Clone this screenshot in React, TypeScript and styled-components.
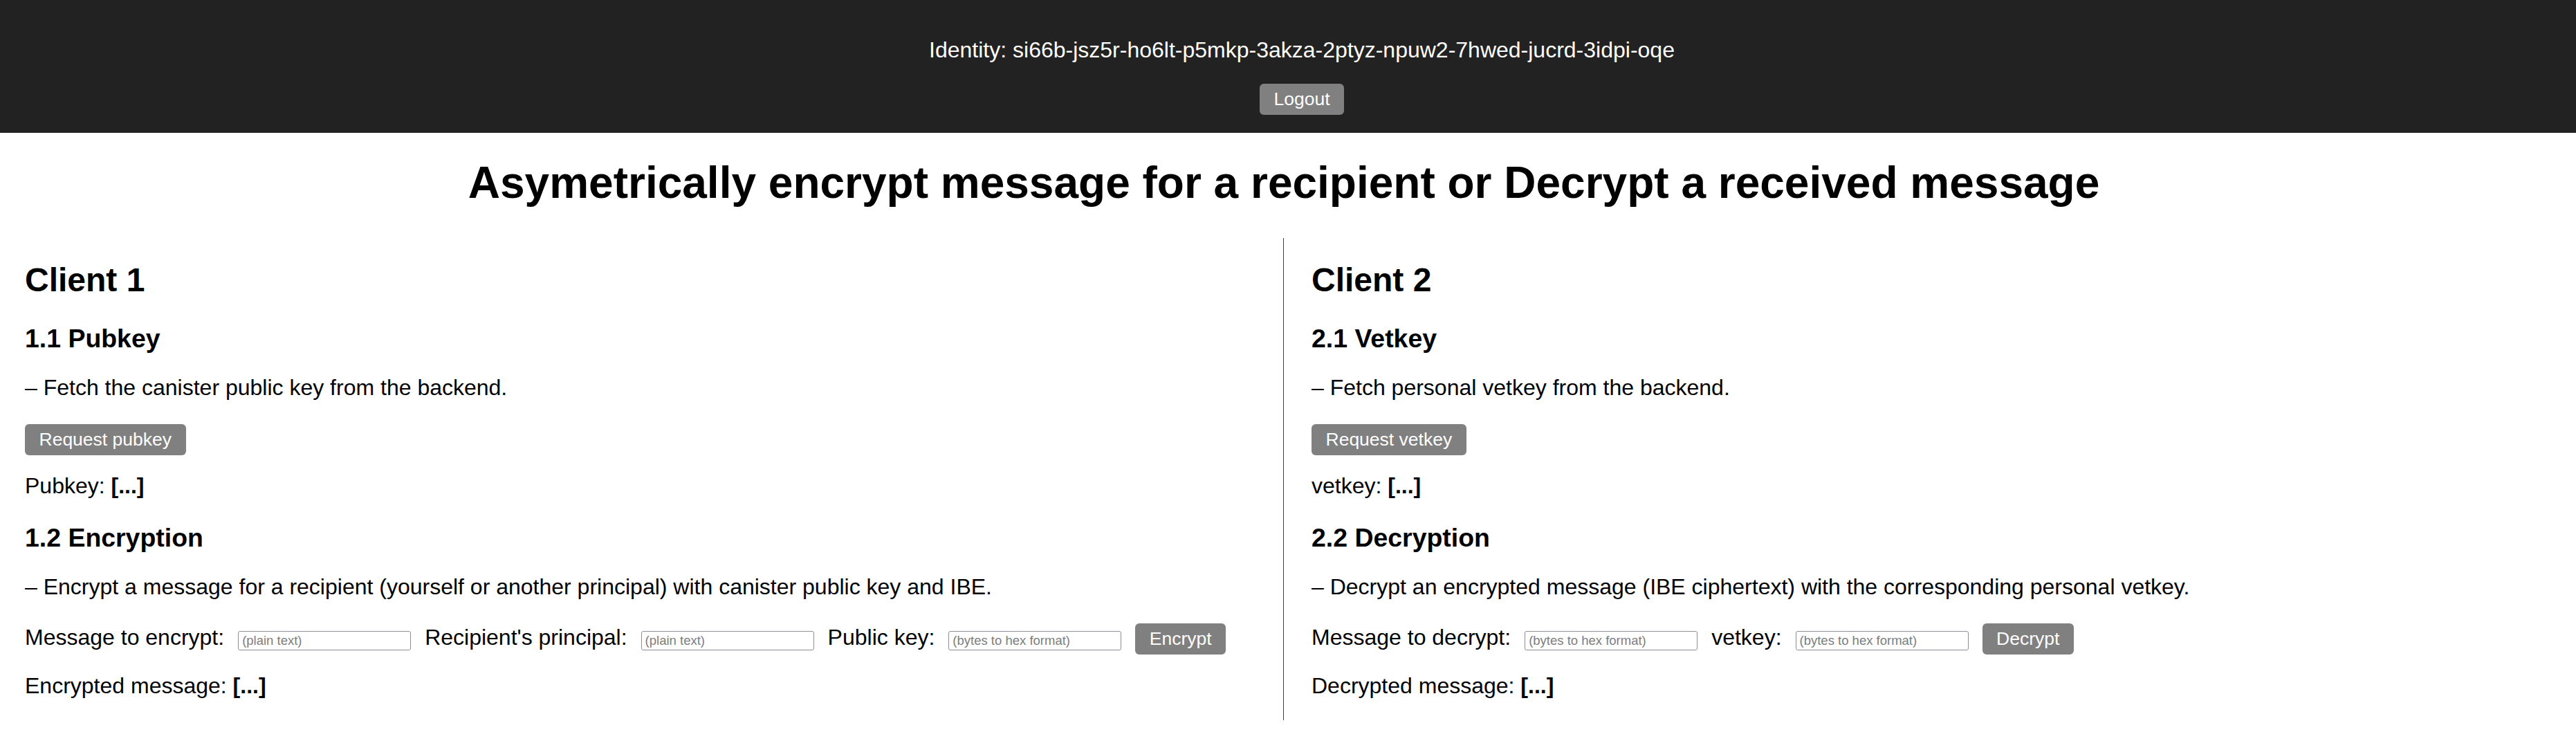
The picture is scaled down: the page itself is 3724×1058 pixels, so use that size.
import React from "react";
import styled, { createGlobalStyle } from "styled-components";

const GlobalStyle = createGlobalStyle`
  html, body {
    margin: 0;
    padding: 0;
    background: #ffffff;
  }
  body {
    font-family: "Liberation Sans", Arial, Helvetica, sans-serif;
    color: #000000;
  }
  * { box-sizing: border-box; }
`;

const Page = styled.div`
  display: flex;
  flex-direction: column;
  width: 100%;
`;

const Header = styled.header`
  background: #222222;
  color: #ffffff;
  display: flex;
  flex-direction: column;
  align-items: center;
  padding: 54px 0 26px 40px;
  gap: 30px;
`;

const Identity = styled.div`
  font-size: 32px;
  line-height: 37px;
`;

const Button = styled.button`
  font-family: "Liberation Sans", Arial, Helvetica, sans-serif;
  font-size: 26.5px;
  line-height: 31px;
  height: 45px;
  padding: 7px 20.5px;
  border: none;
  border-radius: 6px;
  background: #808080;
  color: #ffffff;
  cursor: pointer;
  flex: none;
`;

const Title = styled.h1`
  margin: 35px 0 43px;
  padding-right: 12px;
  font-size: 64px;
  line-height: 74px;
  font-weight: bold;
  text-align: center;
`;

const Columns = styled.main`
  display: grid;
  grid-template-columns: 1855px 1fr;
`;

const Column = styled.section<{ $divider?: boolean }>`
  display: flex;
  flex-direction: column;
  align-items: flex-start;
  padding: 33px 20px 31px ${(p) => (p.$divider ? "40px" : "36px")};
  border-left: ${(p) => (p.$divider ? "1px solid #3a3a3a" : "none")};
`;

const ClientTitle = styled.h2`
  margin: 0;
  font-size: 48px;
  line-height: 56px;
  font-weight: bold;
`;

const SectionTitle = styled.h3`
  margin: 34px 0 0;
  font-size: 37.44px;
  line-height: 44px;
  font-weight: bold;
`;

const Para = styled.p<{ $gap?: number }>`
  margin: ${(p) => p.$gap ?? 31}px 0 0;
  font-size: 32px;
  line-height: 37px;
  white-space: nowrap;
`;

const ActionRow = styled.div`
  margin-top: 34px;
  display: flex;
  align-items: baseline;
  gap: 20px;
  font-size: 32px;
  line-height: 37px;
  white-space: nowrap;
`;

const Label = styled.span`
  font-size: 32px;
  line-height: 37px;
`;

const TextInput = styled.input`
  width: 250px;
  height: 28.5px;
  padding: 0 5px;
  border: 1px solid #8e8e98;
  border-radius: 3px;
  background: #ffffff;
  font-family: "Liberation Sans", Arial, Helvetica, sans-serif;
  font-size: 18.5px;
  color: #000;
  &::placeholder {
    color: #7d7d7d;
  }
`;

type Field = { label: string; placeholder: string };

function Client(props: {
  title: string;
  keyTitle: string;
  keyDesc: string;
  keyButton: string;
  keyLabel: string;
  opTitle: string;
  opDesc: string;
  fields: Field[];
  opButton: string;
  resultLabel: string;
  divider?: boolean;
}) {
  return (
    <Column $divider={props.divider}>
      <ClientTitle>{props.title}</ClientTitle>
      <SectionTitle>{props.keyTitle}</SectionTitle>
      <Para>{props.keyDesc}</Para>
      <ActionRow>
        <Button>{props.keyButton}</Button>
      </ActionRow>
      <Para $gap={26}>
        {props.keyLabel} <b>[...]</b>
      </Para>
      <SectionTitle>{props.opTitle}</SectionTitle>
      <Para>{props.opDesc}</Para>
      <ActionRow>
        {props.fields.map((f) => (
          <React.Fragment key={f.label}>
            <Label>{f.label}</Label>
            <TextInput placeholder={f.placeholder} />
          </React.Fragment>
        ))}
        <Button>{props.opButton}</Button>
      </ActionRow>
      <Para $gap={27}>
        {props.resultLabel} <b>[...]</b>
      </Para>
    </Column>
  );
}

export default function App() {
  return (
    <Page>
      <GlobalStyle />
      <Header>
        <Identity>
          Identity: si66b-jsz5r-ho6lt-p5mkp-3akza-2ptyz-npuw2-7hwed-jucrd-3idpi-oqe
        </Identity>
        <Button>Logout</Button>
      </Header>
      <Title>
        Asymetrically encrypt message for a recipient or Decrypt a received message
      </Title>
      <Columns>
        <Client
          title="Client 1"
          keyTitle="1.1 Pubkey"
          keyDesc="– Fetch the canister public key from the backend."
          keyButton="Request pubkey"
          keyLabel="Pubkey:"
          opTitle="1.2 Encryption"
          opDesc="– Encrypt a message for a recipient (yourself or another principal) with canister public key and IBE."
          fields={[
            { label: "Message to encrypt:", placeholder: "(plain text)" },
            { label: "Recipient's principal:", placeholder: "(plain text)" },
            { label: "Public key:", placeholder: "(bytes to hex format)" },
          ]}
          opButton="Encrypt"
          resultLabel="Encrypted message:"
        />
        <Client
          divider
          title="Client 2"
          keyTitle="2.1 Vetkey"
          keyDesc="– Fetch personal vetkey from the backend."
          keyButton="Request vetkey"
          keyLabel="vetkey:"
          opTitle="2.2 Decryption"
          opDesc="– Decrypt an encrypted message (IBE ciphertext) with the corresponding personal vetkey."
          fields={[
            { label: "Message to decrypt:", placeholder: "(bytes to hex format)" },
            { label: "vetkey:", placeholder: "(bytes to hex format)" },
          ]}
          opButton="Decrypt"
          resultLabel="Decrypted message:"
        />
      </Columns>
    </Page>
  );
}
